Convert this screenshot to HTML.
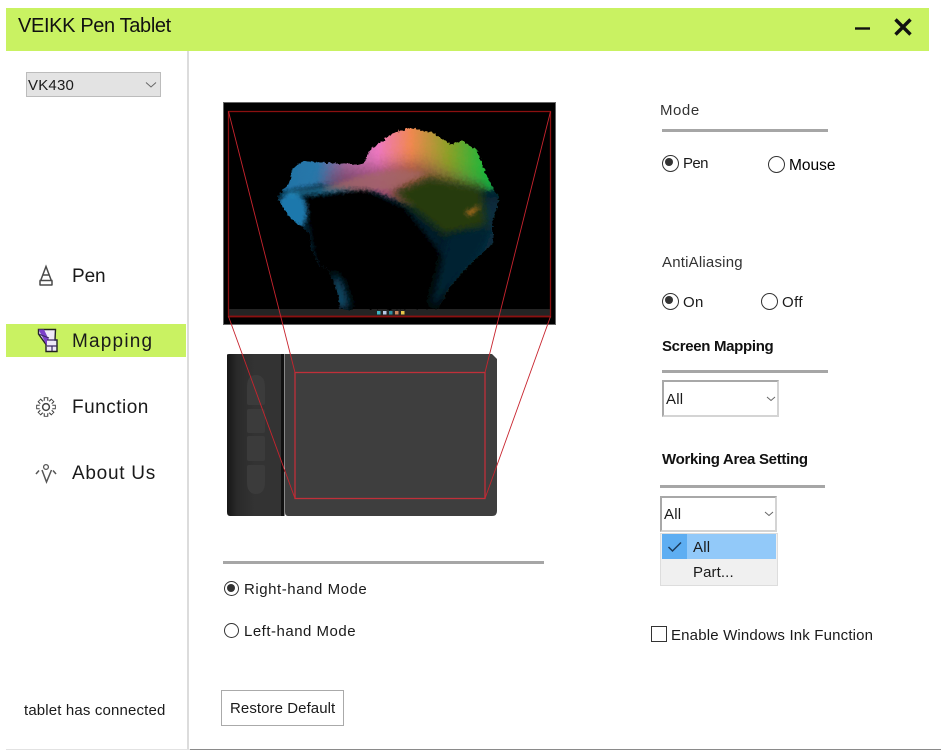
<!DOCTYPE html>
<html>
<head>
<meta charset="utf-8">
<style>
html,body{margin:0;padding:0;background:#fff;}
#p{position:relative;width:941px;height:750px;overflow:hidden;background:#fff;font-family:"Liberation Sans",sans-serif;color:#1a1a1a;}
#p div{position:absolute;}
.t{white-space:nowrap;line-height:20px;height:20px;}
.hr{background:#a6a6a6;height:3px;}
.r{width:15px;height:15px;border:1.4px solid #333;border-radius:50%;box-sizing:border-box;background:#fff;}
.r.on::after{content:"";position:absolute;left:2.3px;top:2.3px;width:8px;height:8px;border-radius:50%;background:#333;}
.dd{box-sizing:border-box;background:#fff;border:2px solid;border-color:#a8a8a8 #d4d4d4 #d4d4d4 #a8a8a8;}
</style>
</head>
<body>
<div id="p">
<div style="left:6px;top:8px;width:923px;height:43px;background:#c9f262"></div>
<div class="t" style="left:18px;top:16px;font-size:20px;line-height:20px;letter-spacing:-.36px;color:#111">VEIKK Pen Tablet</div>
<svg style="position:absolute;left:850px;top:12px" width="70" height="30"><path d="M5 16.500H20" stroke="#111" stroke-width="2.400"/><path d="M45.500 7.500L60.500 22.500M60.500 7.500L45.500 22.500" stroke="#111" stroke-width="3.400"/></svg>

<div style="left:187px;top:51px;width:2px;height:699px;background:#dcdcdc"></div>
<div style="left:6px;top:749px;width:184px;height:1px;background:#e2e2e2"></div>
<div style="left:190px;top:749px;width:751px;height:1px;background:#8a8a8a"></div>

<div style="left:26px;top:72px;width:135px;height:25px;box-sizing:border-box;background:#e3e3e3;border:1px solid #bcbcbc"></div>
<div class="t" style="left:28px;top:76px;font-size:15px;letter-spacing:.2px">VK430</div>
<svg style="position:absolute;left:145px;top:81px" width="12" height="8"><path d="M1 1.500L6 6L11 1.500" fill="none" stroke="#666" stroke-width="1"/></svg>

<div style="left:6px;top:324px;width:180px;height:33px;background:#c9f262"></div>
<div class="t" style="left:72px;top:267px;font-size:19px;letter-spacing:-.1px">Pen</div>
<div class="t" style="left:72px;top:332px;font-size:19px;letter-spacing:1.200px">Mapping</div>
<div class="t" style="left:72px;top:398px;font-size:19px;letter-spacing:.5px">Function</div>
<div class="t" style="left:72px;top:464px;font-size:19px;letter-spacing:.72px">About Us</div>

<svg style="position:absolute;left:30px;top:262px" width="32" height="230" fill="none">
<path d="M10.500 19L16 4.500L21.500 19M13 13H19M9.500 18.500H22.500M10 18.500V23M22 18.500V23M9.500 23H22.500" stroke="#4a4a4a" stroke-width="1.500"/>
<path d="M8.500 67.500H25.500L25 78H27V89.500H16V82.500L8.500 72Z" fill="#efe9f8" stroke="#222" stroke-width="1.400"/>
<path d="M8.500 67.500H14L19 78H17V84Z" fill="#7b3fc8"/>
<path d="M17 78H27M17 84H27M22 84V89M8.500 72L19 76" stroke="#3a2a60" stroke-width="1.200"/>
<g transform="translate(16,145)">
<path d="M0 -6V-9.800M0 6V9.800M-6 0H-9.800M6 0H9.800M-4.200 -4.200L-6.900 -6.900M4.200 4.200L6.900 6.900M-4.200 4.200L-6.900 6.900M4.200 -4.200L6.900 -6.900" stroke="#444" stroke-width="4.600"/>
<path d="M0 -6V-8.900M0 6V8.900M-6 0H-8.900M6 0H8.900M-4.200 -4.200L-6.300 -6.300M4.200 4.200L6.300 6.300M-4.200 4.200L-6.300 6.300M4.200 -4.200L6.300 -6.300" stroke="#fff" stroke-width="2.400"/>
<circle r="6.500" fill="#fff"/>
<circle r="3.400" stroke="#444" stroke-width="1.500"/>
</g>
<circle cx="16" cy="205" r="2.400" stroke="#555" stroke-width="1.300"/>
<path d="M12 208L16.500 220L21.500 208" stroke="#555" stroke-width="1.500"/>
<path d="M6 212L9 208.500M26 212L23 208.500" stroke="#555" stroke-width="1.500"/>
</svg>

<div class="t" style="left:24px;top:701px;font-size:15px;letter-spacing:.15px">tablet has connected</div>

<svg style="position:absolute;left:220px;top:100px" width="345" height="425">
<defs>
<linearGradient id="g" x1="0" y1="0" x2="1" y2="0">
<stop offset="0" stop-color="#1c70a4"/><stop offset=".2" stop-color="#2a78aa"/>
<stop offset=".32" stop-color="#a56aa0"/><stop offset=".46" stop-color="#ee78c0"/>
<stop offset=".6" stop-color="#f08850"/><stop offset=".76" stop-color="#8ca028"/>
<stop offset=".93" stop-color="#14b83c"/><stop offset="1" stop-color="#109a70"/>
</linearGradient>
<linearGradient id="tb" x1="0" y1="0" x2="1" y2="0">
<stop offset="0" stop-color="#161616"/><stop offset=".18" stop-color="#2a2a2a"/><stop offset=".5" stop-color="#333"/><stop offset="1" stop-color="#333"/>
</linearGradient>
<filter id="j" x="-5%" y="-5%" width="110%" height="110%"><feTurbulence type="fractalNoise" baseFrequency=".35" numOctaves="2" seed="4"/><feDisplacementMap in="SourceGraphic" scale="5" xChannelSelector="R" yChannelSelector="G"/></filter>
<filter id="b2" x="-30%" y="-30%" width="160%" height="160%"><feGaussianBlur stdDeviation="2"/></filter>
<filter id="b4" x="-30%" y="-30%" width="160%" height="160%"><feGaussianBlur stdDeviation="4"/></filter>
<filter id="b8" x="-30%" y="-30%" width="160%" height="160%"><feGaussianBlur stdDeviation="8"/></filter>
<clipPath id="c"><path d="M57 97L70 82L72 69L83 61L107 63L127 64L143 64L150 50L173 33L190 28L213 33L230 44L242 41L257 50L267 77L279 98L273 120L273 143L247 167L233 183L217 209H120L117 190L108 170L99 165L91 148L90 133L70 118Z"/></clipPath>
</defs>
<rect x="3.500" y="2.500" width="332" height="222" fill="#000" stroke="#666" stroke-width="1"/>
<rect x="8" y="209" width="323" height="7" fill="#242424"/>
<g filter="url(#j)"><g clip-path="url(#c)">
<rect x="50" y="20" width="235" height="195" fill="url(#g)"/>
<path d="M110 72L200 62L270 90L280 140H90Z" fill="#5a2a40" filter="url(#b8)" opacity=".55"/>
<path d="M40 95L60 92L100 85L150 90L190 105L230 95L290 88V230H40Z" fill="#061e2c" filter="url(#b2)"/>
<path d="M255 95L290 100V190H240Z" fill="#0a3646" filter="url(#b8)" opacity=".75"/>
<path d="M172 92L210 77L262 88L266 130L225 135Z" fill="#263a0c" filter="url(#b4)"/>
<path d="M84 98L145 90L185 108L226 160L226 215H118L96 160Z" fill="#000" filter="url(#b2)"/>
<path d="M228 135L272 125L262 150L232 185L218 205L210 205Z" fill="#062330" filter="url(#b4)"/>
<ellipse cx="72" cy="112" rx="15" ry="20" fill="#1a78ac" filter="url(#b2)"/>
<path d="M117 208L112 172L122 182L130 208Z" fill="#0c4f6e" filter="url(#b4)"/>
<path d="M65 92L110 86L135 88L110 93L70 96Z" fill="#2e94c4" filter="url(#b2)" opacity=".6"/>
<path d="M100 90Q170 62 205 74L170 90L130 90Z" fill="#a56a68" filter="url(#b2)" opacity=".7"/>
<path d="M245 112L262 105L250 116Z" fill="#b87020" filter="url(#b2)"/>
</g></g>
<g>
<rect x="157" y="211" width="3.500" height="3.500" fill="#3fb6c6"/><rect x="163" y="211" width="3.500" height="3.500" fill="#b9c9e8"/><rect x="169" y="211" width="3.500" height="3.500" fill="#2f8f9f"/><rect x="175" y="211" width="3.500" height="3.500" fill="#d08a60"/><rect x="181" y="211" width="3.500" height="3.500" fill="#e8c84a"/>
</g>

<path d="M7 255Q7 254 9 254H62V416H10Q7 416 7 412Z" fill="url(#tb)"/>
<path d="M65 254H272L277 259V411Q277 416 272 416H68Q65 416 65 412Z" fill="#3e3e3e"/>
<rect x="61" y="254" width="3.500" height="162" fill="#111"/>
<path d="M27 287Q27 275 36 275Q45 275 45 287V303Q45 305 43 305H29Q27 305 27 303Z" fill="#3b3b3b"/>
<rect x="27" y="309" width="18" height="24" rx="2" fill="#3b3b3b"/>
<rect x="27" y="336" width="18" height="25" rx="2" fill="#3b3b3b"/>
<path d="M27 367Q27 365 29 365H43Q45 365 45 367V382Q45 394 36 394Q27 394 27 382Z" fill="#3b3b3b"/>

<rect x="8.500" y="11.500" width="322" height="205" fill="none" stroke="#8b1010" stroke-width="1.300"/>
<path d="M8 216.500H331" stroke="#8b1010" stroke-width="1.800"/>
<rect x="75" y="272.500" width="190" height="126" fill="none" stroke="#c0303a" stroke-width="1.300"/>
<path d="M8.500 11.500L75 272.500M330.500 11.500L265 272.500M8.500 216.500L75 398.500M330.500 216.500L265 398.500" fill="none" stroke="#c8242e" stroke-width=".9"/>
</svg>

<div class="hr" style="left:223px;top:561px;width:321px"></div>
<div class="r on" style="left:224px;top:581px"></div>
<div class="t" style="left:244px;top:580px;font-size:15px;letter-spacing:.55px">Right-hand Mode</div>
<div class="r" style="left:224px;top:623px"></div>
<div class="t" style="left:244px;top:622px;font-size:15px;letter-spacing:.5px">Left-hand Mode</div>

<div style="left:221px;top:690px;width:123px;height:36px;box-sizing:border-box;border:1px solid #aaa;background:#fff"></div>
<div class="t" style="left:230px;top:699px;font-size:15px;letter-spacing:.07px">Restore Default</div>

<div class="t" style="left:660px;top:101px;font-size:15px;letter-spacing:.55px;color:#333">Mode</div>
<div class="hr" style="left:662px;top:129px;width:166px"></div>
<div class="r on" style="left:662px;top:155px;width:17px;height:17px"></div>
<div class="t" style="left:683px;top:154px;font-size:15px;letter-spacing:-.6px">Pen</div>
<div class="r" style="left:768px;top:156px;width:17px;height:17px"></div>
<div class="t" style="left:789px;top:156px;font-size:15.500px;letter-spacing:0;color:#000">Mouse</div>

<div class="t" style="left:662px;top:253px;font-size:15px;letter-spacing:.2px;color:#333">AntiAliasing</div>
<div class="r on" style="left:662px;top:293px;width:17px;height:17px"></div>
<div class="t" style="left:683px;top:293px;font-size:15px;letter-spacing:.3px">On</div>
<div class="r" style="left:761px;top:293px;width:17px;height:17px"></div>
<div class="t" style="left:782px;top:293px;font-size:15px;letter-spacing:.4px">Off</div>

<div class="t" style="left:662px;top:337px;font-size:15px;font-weight:bold;letter-spacing:-.32px;color:#111">Screen Mapping</div>
<div class="hr" style="left:662px;top:370px;width:166px"></div>
<div class="dd" style="left:662px;top:380px;width:117px;height:37px"></div>
<div class="t" style="left:666px;top:390px;font-size:15px;letter-spacing:.2px">All</div>
<svg style="position:absolute;left:766px;top:395px" width="10" height="8"><path d="M1 2L5 5.500L9 2" fill="none" stroke="#666" stroke-width="1"/></svg>

<div class="t" style="left:662px;top:450px;font-size:15px;font-weight:bold;letter-spacing:-.3px;color:#111">Working Area Setting</div>
<div class="hr" style="left:660px;top:485px;width:165px"></div>
<div class="dd" style="left:660px;top:496px;width:117px;height:36px"></div>
<div class="t" style="left:664px;top:505px;font-size:15px;letter-spacing:.2px">All</div>
<svg style="position:absolute;left:764px;top:510px" width="10" height="8"><path d="M1 2L5 5.500L9 2" fill="none" stroke="#666" stroke-width="1"/></svg>

<div style="left:660px;top:533px;width:118px;height:53px;box-sizing:border-box;background:#f0f0f0;border:1px solid #ddd"></div>
<div style="left:662px;top:534px;width:114px;height:25px;background:#92c9f9"></div>
<div style="left:662px;top:534px;width:25px;height:25px;background:#5eaef2"></div>
<svg style="position:absolute;left:667px;top:540px" width="16" height="14"><path d="M1.500 7L5.500 11L14 2.500" fill="none" stroke="#1c3a5a" stroke-width="1.500"/></svg>
<div class="t" style="left:693px;top:538px;font-size:15px;letter-spacing:.2px">All</div>
<div class="t" style="left:693px;top:563px;font-size:15px;letter-spacing:.1px">Part...</div>

<div style="left:651px;top:626px;width:16px;height:16px;box-sizing:border-box;border:1.400px solid #333;background:#fff"></div>
<div class="t" style="left:671px;top:626px;font-size:15px;letter-spacing:.17px">Enable Windows Ink Function</div>
</div>
</body>
</html>
